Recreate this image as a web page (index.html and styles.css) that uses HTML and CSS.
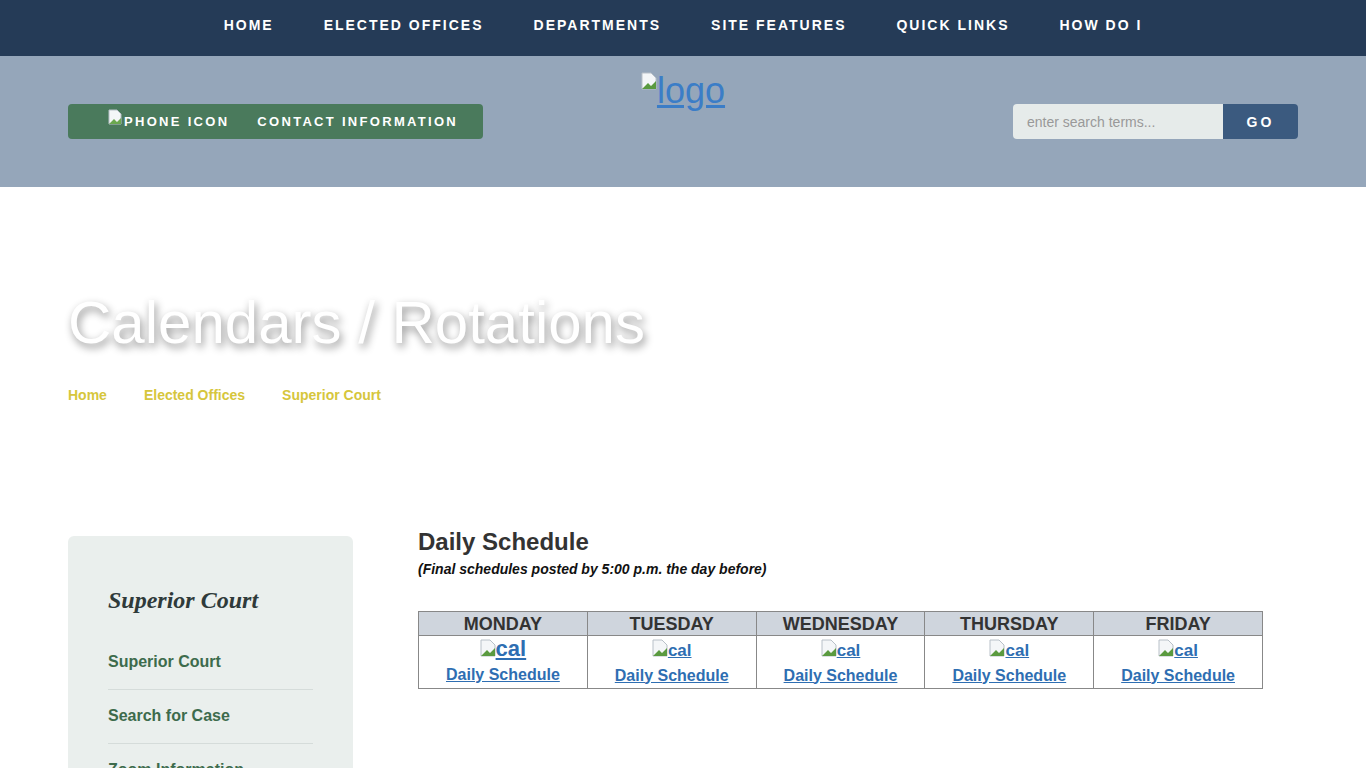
FILE: index.html
```html
<!DOCTYPE html>
<html lang="en">
<head>
    <meta charset="UTF-8">
    <title>Calendars / Rotations</title>
    <link rel="stylesheet" href="styles.css">
</head>
<body>
    <nav class="topnav">
        <a href="#">Home</a>
        <a href="#">Elected Offices</a>
        <a href="#">Departments</a>
        <a href="#">Site Features</a>
        <a href="#">Quick Links</a>
        <a href="#">How Do I</a>
    </nav>

    <header class="masthead">
        <div class="mast-left">
            <a class="contact-btn" href="#">
                <span class="broken"><svg width="14" height="16" viewBox="0 0 14 16"><path d="M1 1h8l4 4v10H1z" fill="#f4f6f8" stroke="#b8c0c8"/><path d="M1 15l5-5 3 3 4-4v6z" fill="#6aa84f"/></svg>Phone Icon</span>
                <span>Contact Information</span>
            </a>
        </div>
        <a class="logo" href="#"><svg width="16" height="18" viewBox="0 0 16 18"><path d="M1 1h9l5 5v11H1z" fill="#f4f6f8" stroke="#b8c0c8"/><path d="M1 17l6-6 3 3 5-5v8z" fill="#5a9a3f"/></svg>logo</a>
        <div class="mast-right">
            <form class="search">
                <input type="text" placeholder="enter search terms...">
                <button type="button">Go</button>
            </form>
        </div>
    </header>

    <section class="hero">
        <h1>Calendars / Rotations</h1>
        <div class="crumbs">
            <a href="#">Home</a>
            <a href="#">Elected Offices</a>
            <a href="#">Superior Court</a>
        </div>
    </section>

    <div class="content">
        <aside class="sidebar">
            <h3>Superior Court</h3>
            <ul>
                <li><a href="#">Superior Court</a></li>
                <li><a href="#">Search for Case</a></li>
                <li><a href="#">Zoom Information</a></li>
            </ul>
        </aside>

        <main class="main">
            <h2>Daily Schedule</h2>
            <p class="note">(Final schedules posted by 5:00 p.m. the day before)</p>
            <table class="week">
                <tr>
                    <th>MONDAY</th><th>TUESDAY</th><th>WEDNESDAY</th><th>THURSDAY</th><th>FRIDAY</th>
                </tr>
                <tr>
                    <td><a class="cal big" href="#"><svg class="bi" width="16" height="18" viewBox="0 0 16 18"><path d="M1 1h9l5 5v11H1z" fill="#f4f6f8" stroke="#b8c0c8"/><path d="M1 17l6-6 3 3 5-5v8z" fill="#5a9a3f"/></svg>cal</a><br><a href="#">Daily Schedule</a></td>
                    <td><a class="cal" href="#"><svg class="bi" width="16" height="18" viewBox="0 0 16 18"><path d="M1 1h9l5 5v11H1z" fill="#f4f6f8" stroke="#b8c0c8"/><path d="M1 17l6-6 3 3 5-5v8z" fill="#5a9a3f"/></svg>cal</a><br><a href="#">Daily Schedule</a></td>
                    <td><a class="cal" href="#"><svg class="bi" width="16" height="18" viewBox="0 0 16 18"><path d="M1 1h9l5 5v11H1z" fill="#f4f6f8" stroke="#b8c0c8"/><path d="M1 17l6-6 3 3 5-5v8z" fill="#5a9a3f"/></svg>cal</a><br><a href="#">Daily Schedule</a></td>
                    <td><a class="cal" href="#"><svg class="bi" width="16" height="18" viewBox="0 0 16 18"><path d="M1 1h9l5 5v11H1z" fill="#f4f6f8" stroke="#b8c0c8"/><path d="M1 17l6-6 3 3 5-5v8z" fill="#5a9a3f"/></svg>cal</a><br><a href="#">Daily Schedule</a></td>
                    <td><a class="cal" href="#"><svg class="bi" width="16" height="18" viewBox="0 0 16 18"><path d="M1 1h9l5 5v11H1z" fill="#f4f6f8" stroke="#b8c0c8"/><path d="M1 17l6-6 3 3 5-5v8z" fill="#5a9a3f"/></svg>cal</a><br><a href="#">Daily Schedule</a></td>
                </tr>
            </table>
        </main>
    </div>
</body>
</html>
```

FILE: styles.css
```css
body {
    margin: 0;
    font-family: 'Liberation Sans', Arial, sans-serif;
    color: #333;
    background: #fff;
}
.topnav {
    height: 56px;
    background: #253b57;
    display: flex;
    justify-content: center;
    align-items: center;
    gap: 50px;
}
.topnav a {
    color: #fff;
    text-decoration: none;
    text-transform: uppercase;
    font-weight: bold;
    font-size: 14px;
    letter-spacing: 2px;
    margin-top: -6px;
}
.masthead {
    height: 131px;
    background: #95a6ba;
    display: grid;
    grid-template-columns: 1fr auto 1fr;
    align-items: start;
    padding: 0 68px;
    box-sizing: border-box;
}
.mast-right {
    display: flex;
    justify-content: flex-end;
}
.contact-btn {
    margin-top: 48px;
    width: 415px;
    height: 35px;
    box-sizing: border-box;
    background: #4a7a5c;
    border-radius: 4px;
    display: flex;
    align-items: center;
    gap: 28px;
    padding-left: 40px;
    color: #fff;
    text-decoration: none;
    text-transform: uppercase;
    font-weight: bold;
    font-size: 13px;
    letter-spacing: 2.3px;
}
.contact-btn .broken {
    display: flex;
    align-items: center;
}
.contact-btn .broken svg {
    margin-top: -10px;
    margin-right: 2px;
}
.logo {
    margin-top: 14px;
    color: #3b7dc7;
    font-size: 36px;
    display: flex;
    align-items: flex-start;
}
.logo svg {
    margin-top: 2px;
}
.search {
    margin-top: 48px;
    display: flex;
    height: 35px;
    border-radius: 4px;
    overflow: hidden;
}
.search input {
    width: 210px;
    border: none;
    background: #e6ebea;
    padding: 0 14px;
    font-family: 'Liberation Sans', Arial, sans-serif;
    font-size: 14px;
    color: #555;
    box-sizing: border-box;
}
.search input::placeholder {
    color: #999;
}
.search button {
    width: 75px;
    border: none;
    background: #3b5a7f;
    color: #fff;
    font-weight: bold;
    text-transform: uppercase;
    letter-spacing: 3px;
    font-size: 14px;
    font-family: 'Liberation Sans', Arial, sans-serif;
}
.hero {
    padding: 101px 68px 0;
    height: 349px;
    box-sizing: border-box;
}
.hero h1 {
    margin: 0;
    font-weight: normal;
    font-size: 60px;
    color: #fff;
    text-shadow: 2px 4px 8px rgba(0, 0, 0, 0.45);
}
.crumbs {
    margin-top: 30px;
    display: flex;
    gap: 37px;
}
.crumbs a {
    color: #d6c63c;
    font-weight: bold;
    font-size: 14px;
    text-decoration: none;
}
.content {
    display: flex;
    padding: 0 68px;
    gap: 65px;
}
.sidebar {
    width: 285px;
    flex: none;
    background: #eaefed;
    border-radius: 6px 6px 0 0;
    padding: 51px 40px 0;
    box-sizing: border-box;
    height: 232px;
    overflow: hidden;
}
.sidebar h3 {
    margin: 0 0 22px;
    font-family: 'Liberation Serif', 'Times New Roman', serif;
    font-style: italic;
    font-weight: bold;
    font-size: 24px;
    color: #2f3a3a;
}
.sidebar ul {
    list-style: none;
    margin: 0;
    padding: 0;
}
.sidebar li {
    padding: 17px 0 18px;
    border-bottom: 1px solid #d5dcda;
}
.sidebar li a {
    color: #3d6b4c;
    font-weight: bold;
    font-size: 16px;
    text-decoration: none;
}
.main {
    flex: 1;
}
.main h2 {
    margin: -8px 0 0;
    font-size: 24px;
    color: #333;
}
.note {
    margin: 5px 0 0;
    font-size: 14px;
    font-style: italic;
    font-weight: bold;
    color: #111;
}
.week {
    margin-top: 34px;
    width: 845px;
    border-collapse: collapse;
    table-layout: fixed;
}
.week th {
    background: #cfd5dd;
    border: 1px solid #888;
    font-size: 18px;
    color: #333;
    height: 23px;
    padding: 0;
    line-height: 22px;
}
.week td {
    border: 1px solid #888;
    text-align: center;
    padding: 2px 0 0;
    font-size: 16px;
    font-weight: bold;
    line-height: 1.5;
}
.week a {
    color: #2e6eb2;
}
.cal {
    font-size: 17px;
}
.cal.big {
    font-size: 22px;
    line-height: 1;
}
.bi {
    vertical-align: -1px;
}
```
